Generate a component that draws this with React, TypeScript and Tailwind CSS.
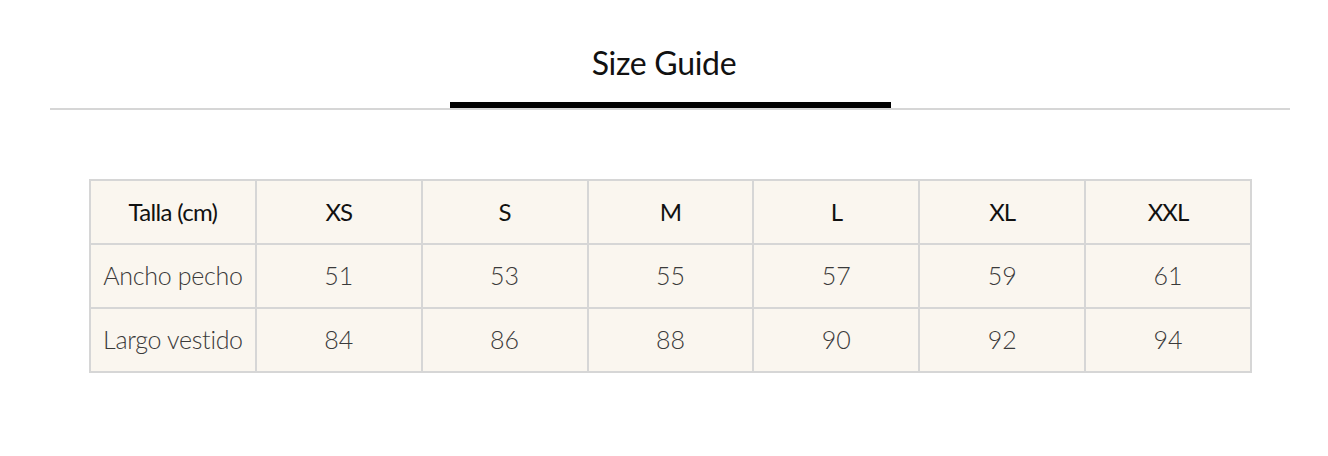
const sizes = ["XS", "S", "M", "L", "XL", "XXL"];

const rows = [
  { label: "Ancho pecho", values: [51, 53, 55, 57, 59, 61] },
  { label: "Largo vestido", values: [84, 86, 88, 90, 92, 94] },
];

const App = () => {
  return (
    <div className="w-full h-[456px] bg-white font-['Lato',sans-serif]">
      {/* Heading */}
      <div className="pt-[47px] text-center">
        <h1 className="text-[32px] leading-none text-[#111] tracking-[-0.3px]">Size Guide</h1>
      </div>
      <div className="ml-[50px] mr-[38px] mt-[23px] border-b-2 border-[#d6d6d6]">
        <div className="mx-auto w-[441px] h-[6px] bg-black" />
      </div>

      {/* Table */}
      <div className="ml-[89px] w-[1163px] mt-[69px]">
        <table className="w-full table-fixed border-collapse border-2 border-[#d6d6d6] bg-[#faf6ef]">
          <thead>
            <tr>
              <th className="h-[64px] border-2 border-[#d6d6d6] text-[24px] font-normal text-[#111] tracking-[-0.7px]">
                Talla (cm)
              </th>
              {sizes.map((s) => (
                <th
                  key={s}
                  className="h-[64px] border-2 border-[#d6d6d6] text-[24px] font-normal text-[#111] tracking-[-1px]"
                >
                  {s}
                </th>
              ))}
            </tr>
          </thead>
          <tbody>
            {rows.map((r) => (
              <tr key={r.label}>
                <td className="h-[64px] border-2 border-[#d6d6d6] text-center text-[25px] font-light text-[#3a3a3a] tracking-[-0.3px]">
                  {r.label}
                </td>
                {r.values.map((v) => (
                  <td
                    key={v}
                    className="h-[64px] border-2 border-[#d6d6d6] text-center text-[25px] font-light text-[#3a3a3a]"
                  >
                    {v}
                  </td>
                ))}
              </tr>
            ))}
          </tbody>
        </table>
      </div>
    </div>
  );
};

export default App;
